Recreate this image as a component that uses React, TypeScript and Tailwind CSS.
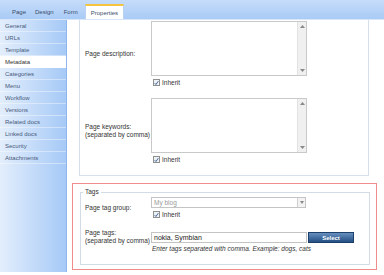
const tabs = ['Page', 'Design', 'Form'];
const menu = ['General', 'URLs', 'Template', 'Metadata', 'Categories', 'Menu', 'Workflow', 'Versions', 'Related docs', 'Linked docs', 'Security', 'Attachments'];

function Check() {
  return (
    <span className="w-[7px] h-[7px] border border-[#8e8f8f] bg-[#eef2f6] flex items-center justify-center">
      <svg width="6" height="6" viewBox="0 0 6 6">
        <path d="M0.8 3.2 L2.3 4.8 L5.2 0.8" stroke="#3a5a8c" strokeWidth="1.1" fill="none" />
      </svg>
    </span>
  );
}

function Inherit() {
  return (
    <div className="flex items-center gap-[2px] h-[9px] mt-[2px] ml-[2px]">
      <Check />
      <span>Inherit</span>
    </div>
  );
}

function TextArea() {
  return (
    <div className="w-[156px] h-[55px] border border-[#c9c9c9] bg-white flex justify-end">
      <div className="w-[9px] h-full bg-[#f0f0f0] border-l border-[#e2e2e2] flex flex-col justify-between items-center py-[3px]">
        <svg width="5" height="3" viewBox="0 0 5 3"><path d="M0 3 L2.5 0 L5 3 Z" fill="#888" /></svg>
        <svg width="5" height="3" viewBox="0 0 5 3"><path d="M0 0 L2.5 3 L5 0 Z" fill="#888" /></svg>
      </div>
    </div>
  );
}

export default function App() {
  return (
    <div className="w-[384px] h-[275px] bg-white overflow-hidden font-['Liberation_Sans',Arial,sans-serif] text-[6.5px] leading-[8px] text-[#333]">
      {/* Tabs */}
      <div className="h-[20px] flex items-end pl-[12px] bg-gradient-to-b from-[#c6dcfa] to-[#a9cbf6] border-b border-[#d8e6f8] text-[6px] text-[#3a4d6a]">
        {tabs.map((t, i) => (
          <span key={t} className={`h-[15px] flex items-center ${i === 0 ? 'mr-[9px]' : 'mr-[10px]'}`}>{t}</span>
        ))}
        <span className="h-[15px] ml-[-3px] px-[5px] flex items-center bg-white border-t-2 border-t-[#f4c33f] border-x border-x-[#b9d2f2]">Properties</span>
      </div>

      <div className="flex">
        {/* Sidebar */}
        <div className="w-[67px] h-[252px] bg-gradient-to-r from-[#e3eefc] to-[#a6c9f6] border-r border-[#8fb6ec] text-[6px] text-[#46597a]">
          {menu.map((m) => (
            <div key={m} className={`h-[12px] pl-[5px] flex items-center border-b border-white/40 ${m === 'Metadata' ? 'bg-white text-[#333]' : ''}`}>{m}</div>
          ))}
        </div>

        {/* Content */}
        <div className="flex-1">
          <div className="ml-[12px] w-[290px] border-x border-b border-[#d6dfeb] pt-[1px] pb-[11px]">
            <div className="flex items-center">
              <div className="w-[71px] pl-[5px]">Page description:</div>
              <div>
                <TextArea />
                <Inherit />
              </div>
            </div>
            <div className="flex items-center mt-[11px]">
              <div className="w-[71px] pl-[5px]">
                <div>Page keywords:</div>
                <div>(separated by comma)</div>
              </div>
              <div>
                <TextArea />
                <Inherit />
              </div>
            </div>
          </div>

          <div className="mt-[7px] ml-[5px] w-[305px] h-[87px] border border-[#f08c8c] pt-[4px] pl-[7px]">
            <fieldset className="w-[290px] h-[77px] border border-[#d3dbe6]">
              <legend className="ml-[2px] px-[2px]">Tags</legend>
              <div className="flex items-center pt-[1px]">
                <div className="w-[70px] pl-[4px]">Page tag group:</div>
                <div>
                  <div className="w-[155px] h-[11px] border border-[#c4c4c4] flex items-center justify-between pl-[2px] text-[#9a9a9a]">
                    <span>My blog</span>
                    <span className="w-[8px] h-[9px] border-l border-[#d0d0d0] bg-[#f3f3f3] flex items-center justify-center">
                      <svg width="4" height="3" viewBox="0 0 4 3"><path d="M0 0 L2 3 L4 0 Z" fill="#888" /></svg>
                    </span>
                  </div>
                  <Inherit />
                </div>
              </div>
              <div className="flex mt-[13px]">
                <div className="w-[70px] pl-[4px] -mt-[3px]">
                  <div>Page tags:</div>
                  <div>(separated by comma)</div>
                </div>
                <div>
                  <div className="flex items-center gap-[1px]">
                    <div className="w-[156px] h-[11px] border border-[#c4c4c4] flex items-center pl-[2px] text-[7px] text-[#222]">nokia, Symbian</div>
                    <div className="w-[46px] h-[11px] bg-gradient-to-b from-[#6790c0] to-[#234f84] border border-[#1c3f6b] flex items-center justify-center text-white font-bold text-[6px]">Select</div>
                  </div>
                  <div className="italic mt-[2px] ml-[1px]">Enter tags separated with comma. Example: dogs, cats</div>
                </div>
              </div>
            </fieldset>
          </div>
        </div>
      </div>
    </div>
  );
}
